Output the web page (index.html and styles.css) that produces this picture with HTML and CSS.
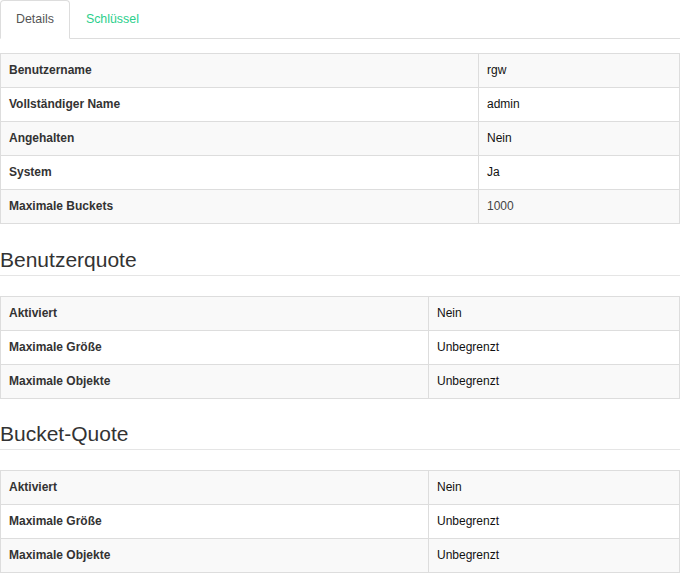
FILE: index.html
```html
<!DOCTYPE html>
<html lang="de">
<head>
<meta charset="utf-8">
<link rel="stylesheet" href="styles.css">
</head>
<body>
<ul class="tabs">
  <li class="tab active"><span>Details</span></li>
  <li class="tab"><span>Schlüssel</span></li>
</ul>
<div class="content">
  <table class="grid grid-wide">
    <tr><th>Benutzername</th><td>rgw</td></tr>
    <tr><th>Vollständiger Name</th><td>admin</td></tr>
    <tr><th>Angehalten</th><td>Nein</td></tr>
    <tr><th>System</th><td>Ja</td></tr>
    <tr><th>Maximale Buckets</th><td class="muted">1000</td></tr>
  </table>

  <h3 class="section">Benutzerquote</h3>
  <table class="grid grid-narrow">
    <tr><th>Aktiviert</th><td>Nein</td></tr>
    <tr><th>Maximale Größe</th><td>Unbegrenzt</td></tr>
    <tr><th>Maximale Objekte</th><td>Unbegrenzt</td></tr>
  </table>

  <h3 class="section section-tight">Bucket-Quote</h3>
  <table class="grid grid-narrow">
    <tr><th>Aktiviert</th><td>Nein</td></tr>
    <tr><th>Maximale Größe</th><td>Unbegrenzt</td></tr>
    <tr><th>Maximale Objekte</th><td>Unbegrenzt</td></tr>
  </table>
</div>
</body>
</html>
```
FILE: styles.css
```css
html, body {
  margin: 0;
  padding: 0;
  background: #fff;
}
body {
  font-family: "Liberation Sans", Arial, sans-serif;
  font-size: 12px;
  line-height: 1.42857;
  color: #333;
}
.tabs {
  list-style: none;
  margin: 0;
  padding: 0;
  display: flex;
  border-bottom: 1px solid #ddd;
}
.tab {
  margin-bottom: -1px;
}
.tab span {
  display: block;
  padding: 10px 15px;
  font-size: 12.4px;
  line-height: 17px;
  color: #2bcf8c;
  border: 1px solid transparent;
  border-radius: 4px 4px 0 0;
}
.tab.active span {
  color: #555;
  background: #fff;
  border-color: #ddd #ddd transparent;
}
.content {
  padding-top: 14px;
}
.grid {
  width: 100%;
  border-collapse: collapse;
  border: 1px solid #ddd;
}
.grid th, .grid td {
  padding: 8px;
  border: 1px solid #ddd;
  text-align: left;
  vertical-align: top;
  line-height: 17px;
}
.grid th {
  font-weight: bold;
  color: #333;
}
.grid td {
  color: #111;
}
.grid td.muted {
  color: #444;
}
.grid tr:nth-child(odd) {
  background: #f9f9f9;
}
.grid-wide th {
  width: 461px;
}
.grid-narrow th {
  width: 411px;
}
.section {
  margin: 24px 0 20px;
  padding-bottom: 4px;
  border-bottom: 1px solid #e5e5e5;
  font-size: 21px;
  font-weight: normal;
  line-height: 23px;
  color: #333;
}
.section-tight {
  margin-top: 23px;
}
```
